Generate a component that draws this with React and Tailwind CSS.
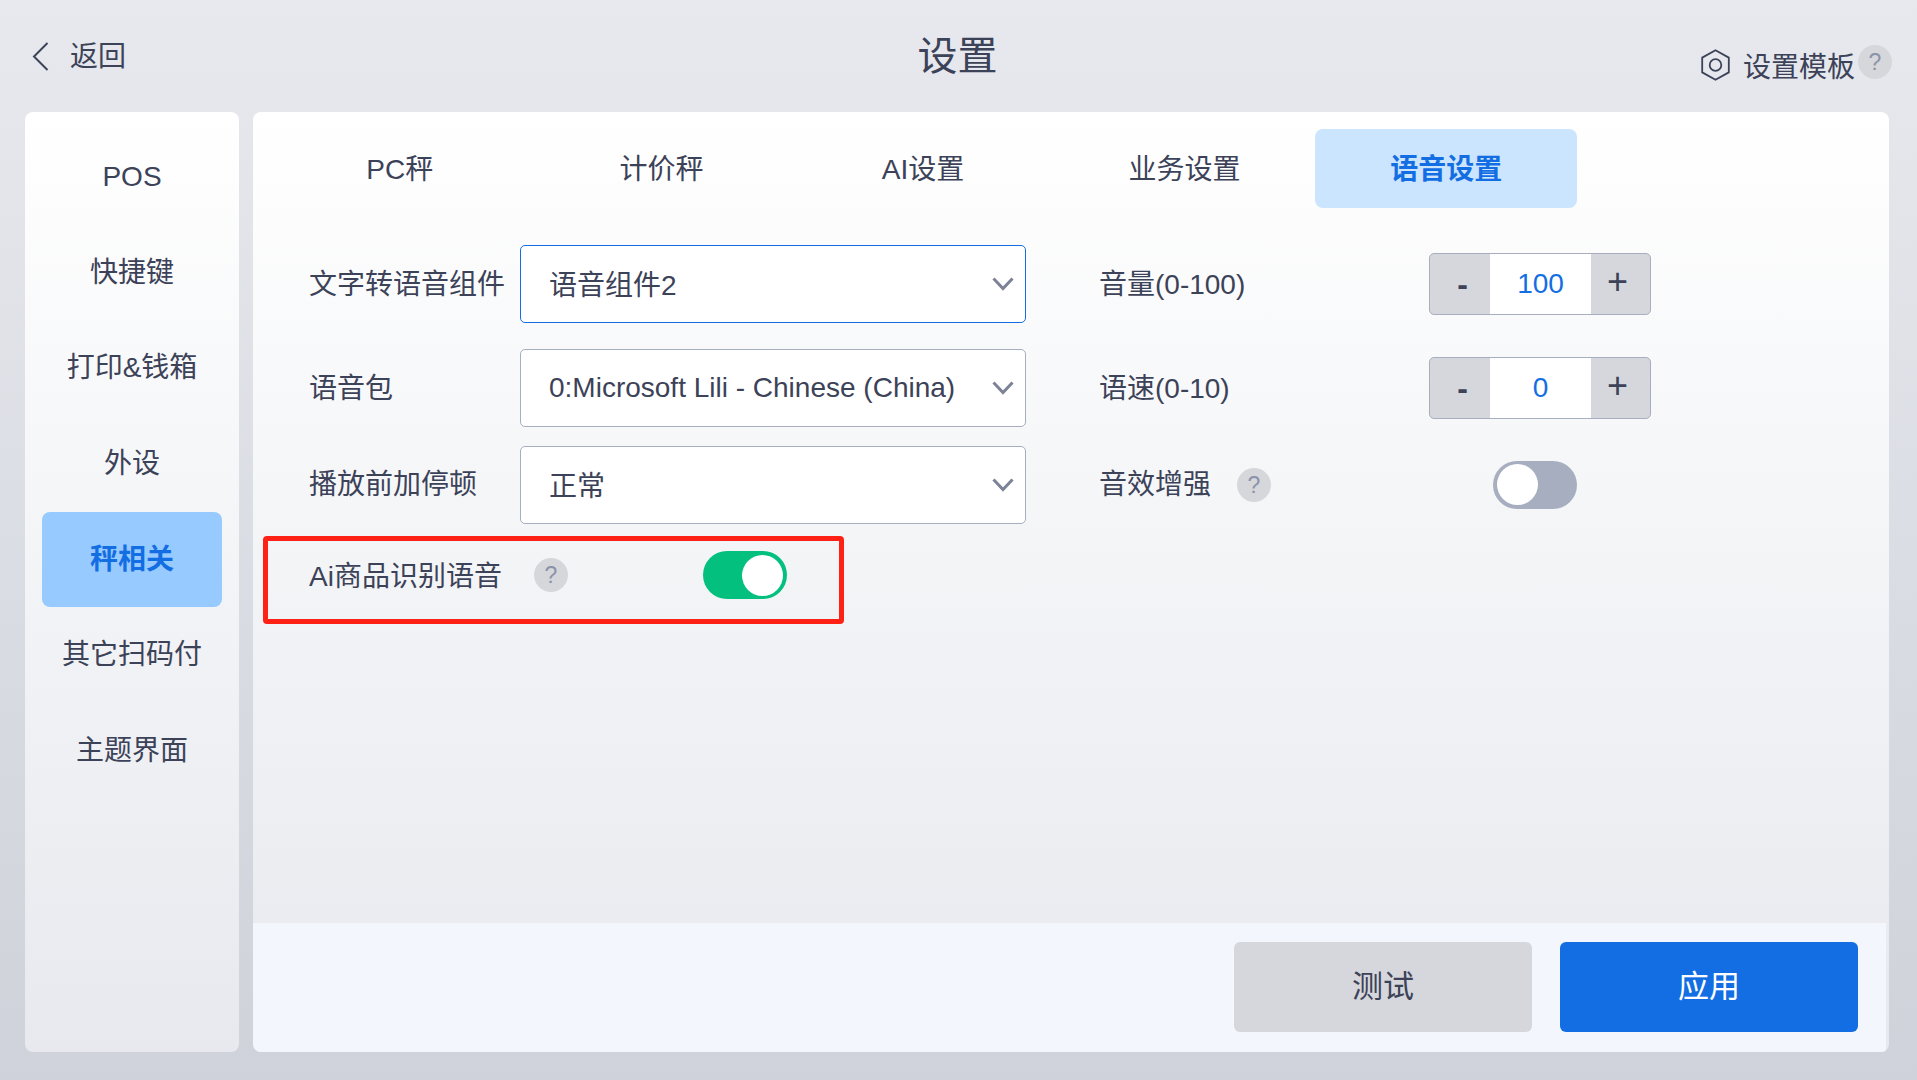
import React from "react";

const FONT = "font-['Liberation_Sans','Noto_Sans_CJK_SC',sans-serif]";
const menu = ["POS", "快捷键", "打印&钱箱", "外设", "秤相关", "其它扫码付", "主题界面"];
const tabs = ["PC秤", "计价秤", "AI设置", "业务设置", "语音设置"];

const Help = ({ className = "" }) => (
  <span
    className={`flex h-[34px] w-[34px] shrink-0 items-center justify-center rounded-full bg-[#d6d7da] text-[23px] text-[#8b93ab] ${className}`}
  >
    ?
  </span>
);

const Toggle = ({ on }) => (
  <div
    className={`flex h-[48px] w-[84px] shrink-0 items-center rounded-full px-[4px] ${
      on ? "justify-end bg-[#03c07f]" : "justify-start bg-[#a6aec0]"
    }`}
  >
    <span className="h-[41px] w-[41px] rounded-full bg-white" />
  </div>
);

const Select = ({ value, active, textClass = "" }) => (
  <div
    className={`flex h-[78px] w-[506px] shrink-0 items-center justify-between rounded-[5px] border bg-white pl-[28px] pr-[11px] ${
      active ? "border-[#136ee3]" : "border-[#a6aec0]"
    }`}
  >
    <span className={textClass}>{value}</span>
    <svg width="22" height="14" viewBox="0 0 22 14" fill="none">
      <path d="M1.5 1.5L11 11.5l9.5-10" stroke="#7d8397" strokeWidth="3" />
    </svg>
  </div>
);

const Stepper = ({ value }) => (
  <div className="flex h-[62px] w-[222px] shrink-0 overflow-hidden rounded-[5px] border border-[#a6aec0] bg-[#d6d7dd]">
    <div className="flex w-[60px] items-center justify-center pl-[5px] text-[32px] font-bold">-</div>
    <div className="flex w-[101px] items-center justify-center bg-white text-[#136ee3]">{value}</div>
    <div className="flex flex-1 items-center justify-center pb-[4px] pr-[6px] text-[36px]">+</div>
  </div>
);

export default function App() {
  return (
    <div
      className={`flex h-[1080px] w-[1917px] flex-col overflow-hidden bg-gradient-to-b from-[#e7e9ee] to-[#cfd2da] text-[28px] text-[#3c4258] ${FONT}`}
    >
      <header className="grid h-[112px] shrink-0 grid-cols-3">
        <div className="flex items-center pl-[32px]">
          <svg width="17" height="29" viewBox="0 0 17 29" fill="none">
            <path d="M15.5 1L2 14.5 15.5 28" stroke="#3c4258" strokeWidth="2" />
          </svg>
          <span className="ml-[21px] mt-[2px]">返回</span>
        </div>
        <h1 className="flex items-center justify-center pr-[2px] text-[40px] font-normal">设置</h1>
        <div className="flex justify-end pt-[45px] pr-[25px]">
          <svg className="mt-[4px]" width="29" height="32" viewBox="0 0 29 32" fill="none">
            <path d="M14.5 1.2L27.8 8.6v14.8L14.5 30.8 1.2 23.4V8.6z" stroke="#3c4258" strokeWidth="1.8" />
            <circle cx="14.5" cy="16" r="5.8" stroke="#3c4258" strokeWidth="1.8" />
          </svg>
          <span className="ml-[13px] mt-[2px]">设置模板</span>
          <Help className="ml-[3px]" />
        </div>
      </header>

      <div className="flex h-[940px] gap-[14px] pl-[25px] pr-[28px]">
        <aside className="flex w-[214px] shrink-0 flex-col items-center rounded-[8px] bg-gradient-to-b from-white to-[#e7e9ee] pt-[17px]">
          {menu.map((item) => (
            <div
              key={item}
              className={`flex h-[95.7px] w-[180px] shrink-0 items-center justify-center rounded-[8px] ${
                item === "秤相关" ? "bg-[#97caff] font-bold text-[#136ee3]" : ""
              }`}
            >
              {item}
            </div>
          ))}
        </aside>

        <main className="flex w-[1636px] flex-col overflow-hidden rounded-[8px] bg-gradient-to-b from-white to-[#e7e9ee]">
          <nav className="flex px-[16px] pt-[17px]">
            {tabs.map((tab) => (
              <div
                key={tab}
                className={`flex h-[79px] w-[261.6px] items-center justify-center rounded-[8px] pt-[2px] ${
                  tab === "语音设置" ? "bg-[#cbe5ff] font-bold text-[#136ee3]" : ""
                }`}
              >
                {tab}
              </div>
            ))}
          </nav>

          <section className="flex-1 pt-[37px]">
            <div className="flex items-center pl-[56px]">
              <span className="w-[211px] shrink-0 pt-[1px]">文字转语音组件</span>
              <Select value="语音组件2" active textClass="pt-[4px]" />
              <span className="ml-[73px] w-[330px] shrink-0 pt-[1px]">音量(0-100)</span>
              <Stepper value="100" />
            </div>
            <div className="mt-[26px] flex items-center pl-[56px]">
              <span className="w-[211px] shrink-0 pt-[1px]">语音包</span>
              <Select value="0:Microsoft Lili - Chinese (China)" />
              <span className="ml-[73px] w-[330px] shrink-0 pt-[1px]">语速(0-10)</span>
              <Stepper value="0" />
            </div>
            <div className="mt-[19px] flex items-center pl-[56px]">
              <span className="w-[211px] shrink-0">播放前加停顿</span>
              <Select value="正常" textClass="pt-[4px]" />
              <span className="ml-[73px] w-[138px] shrink-0">音效增强</span>
              <Help />
              <div className="-mt-[1px] ml-[222px]">
                <Toggle />
              </div>
            </div>
            <div className="ml-[10px] mt-[12px] flex h-[88px] w-[581px] items-start rounded-[4px] border-[5px] border-[#ff2116] pl-[41px] pt-[10px]">
              <span className="mt-[5px] w-[225px] shrink-0">Ai商品识别语音</span>
              <Help className="mt-[7px]" />
              <div className="ml-[135px]">
                <Toggle on />
              </div>
            </div>
          </section>

          <footer className="mr-[3px] flex h-[129px] shrink-0 items-center justify-end gap-[28px] bg-[#f3f6fc] pb-[2px] pr-[28px] text-[31px]">
            <button className="h-[90px] w-[298px] rounded-[6px] bg-[#d6d7dc] pt-[2px]">测试</button>
            <button className="h-[90px] w-[298px] rounded-[6px] bg-[#136ee3] pt-[2px] text-white">应用</button>
          </footer>
        </main>
      </div>
    </div>
  );
}
